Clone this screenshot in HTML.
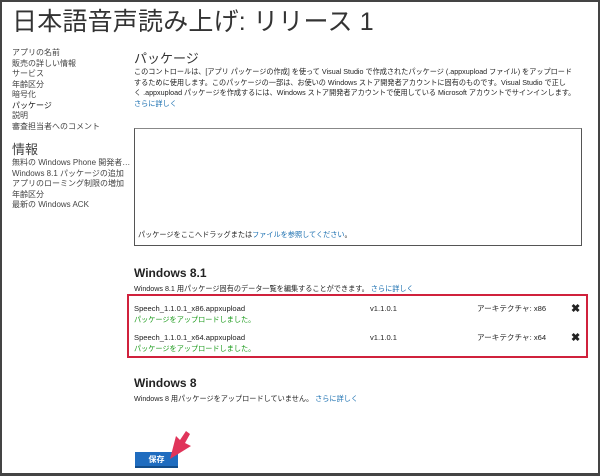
<!DOCTYPE html>
<html><head><meta charset="utf-8"><style>
*{margin:0;padding:0;box-sizing:border-box}
body{width:600px;height:476px;position:relative;background:#fff;font-family:"Liberation Sans","Noto Sans CJK JP",sans-serif;color:#222;overflow:hidden}
#frame{position:absolute;left:0;top:0;width:600px;height:476px;border:2px solid #444;border-bottom-width:3px}
.a{position:absolute;white-space:nowrap}
.s{font-size:8px;line-height:10.5px}
.p{font-size:7.15px;line-height:10.5px}
.f{font-size:7.6px;line-height:10.5px}
.b{color:#1a6fb0}
.g{color:#1a9a1a;font-size:7.15px}
h1{position:absolute;left:12px;top:2px;font-size:25px;font-weight:normal;color:#333;white-space:nowrap;letter-spacing:0.2px}
</style></head><body>
<div id="frame"></div>
<h1>日本語音声読み上げ: リリース 1</h1>
<div class="a s" style="left:12px;top:48px;color:#444">アプリの名前<br>販売の詳しい情報<br>サービス<br>年齢区分<br>暗号化<br><span style="color:#111">パッケージ</span><br>説明<br>審査担当者へのコメント</div>
<div class="a" style="left:12px;top:139px;font-size:13px;color:#444">情報</div>
<div class="a s" style="left:12px;top:158px;color:#444">無料の Windows Phone 開発者…<br>Windows 8.1 パッケージの追加<br>アプリのローミング制限の増加<br>年齢区分<br>最新の Windows ACK</div>
<div class="a" style="left:134px;top:48px;font-size:13px;color:#333">パッケージ</div>
<div class="a p" style="left:134px;top:67px">このコントロールは、[アプリ パッケージの作成] を使って Visual Studio で作成されたパッケージ (.appxupload ファイル) をアップロード<br>するために使用します。このパッケージの一部は、お使いの Windows ストア開発者アカウントに固有のものです。Visual Studio で正し<br>く .appxupload パッケージを作成するには、Windows ストア開発者アカウントで使用している Microsoft アカウントでサインインします。<br><span class="b">さらに詳しく</span></div>
<div class="a" style="left:134px;top:128px;width:448px;height:118px;border:1px solid #555;border-top-color:#888"></div>
<div class="a p" style="left:138px;top:230px">パッケージをここへドラッグまたは<span class="b">ファイルを参照してください</span>。</div>
<div class="a" style="left:134px;top:266px;font-size:12px;font-weight:bold;color:#222">Windows 8.1</div>
<div class="a p" style="left:134px;top:284px">Windows 8.1 用パッケージ固有のデータ一覧を編集することができます。 <span class="b">さらに詳しく</span></div>
<div class="a" style="left:127px;top:294px;width:461px;height:64px;border:2px solid #d0213c"></div>
<div class="a f" style="left:134px;top:304px">Speech_1.1.0.1_x86.appxupload<br><span class="g">パッケージをアップロードしました。</span></div>
<div class="a f" style="left:370px;top:304px">v1.1.0.1</div>
<div class="a f" style="left:477px;top:304px">アーキテクチャ: x86</div>
<div class="a" style="left:571px;top:302px;font-size:11px;font-weight:bold">✖</div>
<div class="a f" style="left:134px;top:333px">Speech_1.1.0.1_x64.appxupload<br><span class="g">パッケージをアップロードしました。</span></div>
<div class="a f" style="left:370px;top:333px">v1.1.0.1</div>
<div class="a f" style="left:477px;top:333px">アーキテクチャ: x64</div>
<div class="a" style="left:571px;top:331px;font-size:11px;font-weight:bold">✖</div>
<div class="a" style="left:134px;top:376px;font-size:12px;font-weight:bold;color:#222">Windows 8</div>
<div class="a p" style="left:134px;top:394px">Windows 8 用パッケージをアップロードしていません。 <span class="b">さらに詳しく</span></div>
<div class="a" style="left:135px;top:452px;width:43px;height:16px;background:#1f6cbf;border-bottom:2px solid #134d8a;color:#fff;font-size:8px;font-weight:bold;text-align:center;line-height:15px">保存</div>
<svg class="a" style="left:160px;top:425px" width="40" height="40" viewBox="0 0 40 40"><polygon points="10,34 16,11 20,15 26,6 30,9 25,18 31,21" fill="#e0345a"/></svg>
</body></html>
